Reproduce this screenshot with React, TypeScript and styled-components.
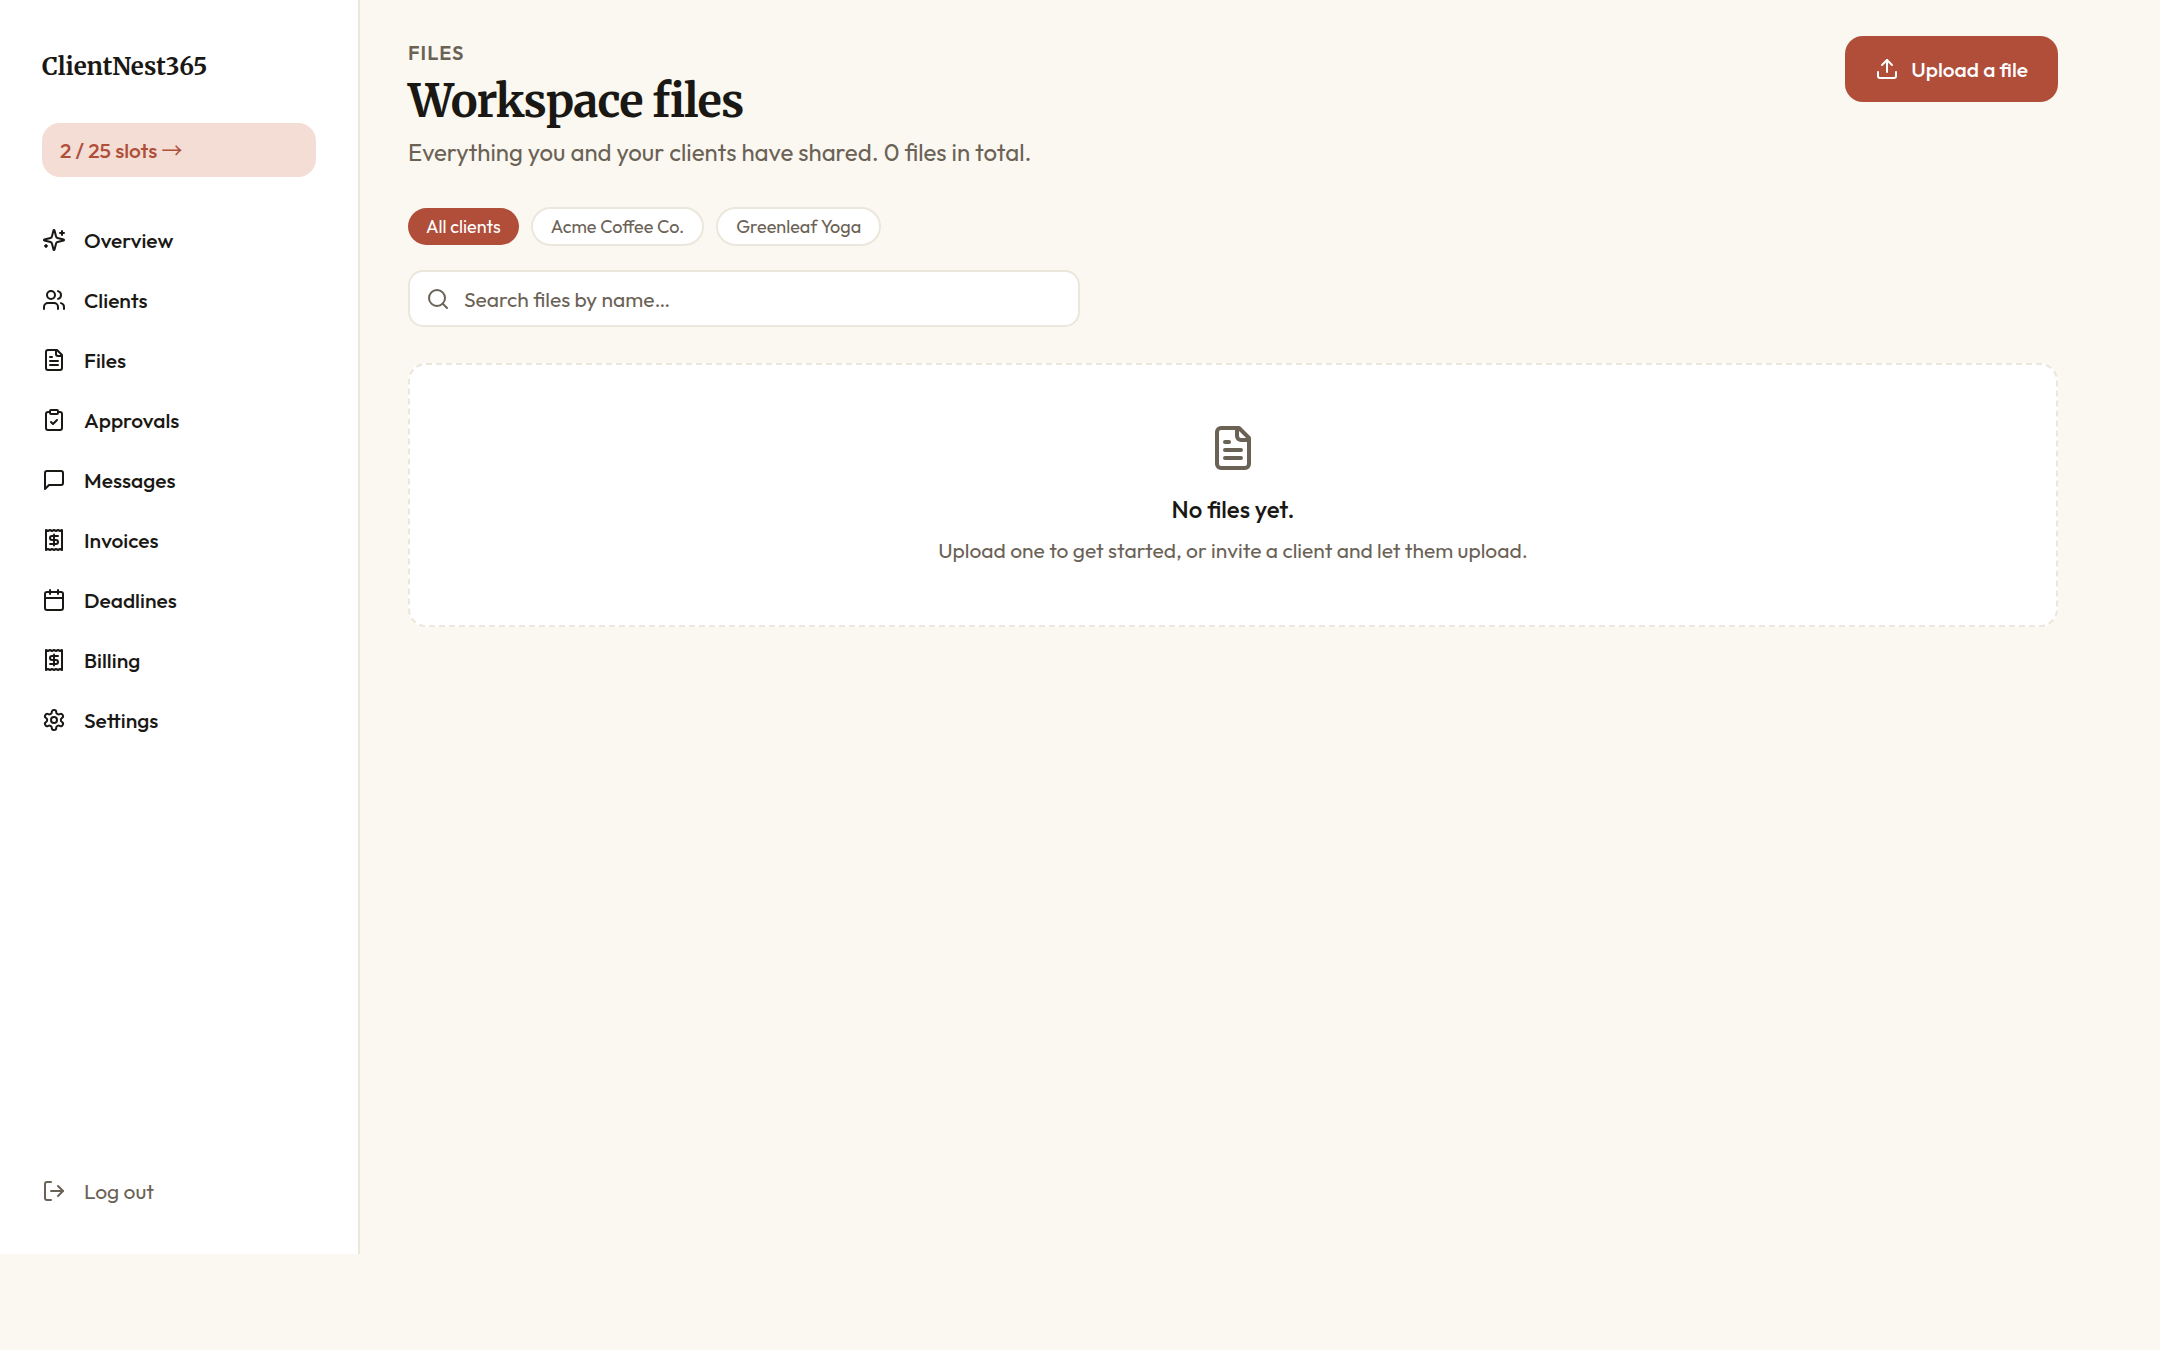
import React from 'react';
import styled, { createGlobalStyle } from 'styled-components';
import { Calendar, ClipboardCheck, LogOut, Search, Upload, Users } from 'lucide-react';

const color = {
  page: '#fbf8f1',
  surface: '#ffffff',
  ink: '#1a1814',
  muted: '#6b6256',
  line: '#ece7dc',
  accent: '#b04e3a',
  accentSoft: '#f4ddd4',
};

const sans = "Outfit, Lato, 'Open Sans', sans-serif";
const serif = "Merriweather, 'DejaVu Serif', serif";

const GlobalStyle = createGlobalStyle`
  *, *::before, *::after { box-sizing: border-box; }
  body {
    margin: 0;
    background: ${color.page};
    color: ${color.ink};
    font-family: ${sans};
    font-size: 21px;
    line-height: 30px;
  }
  h1, p { margin: 0; }
  button, input { font: inherit; color: inherit; }
  a { color: inherit; text-decoration: none; }
`;

const Shell = styled.div`
  display: grid;
  grid-template-columns: 360px minmax(0, 1fr);
  align-items: start;
  min-height: 100vh;
`;

const Sidebar = styled.aside`
  display: flex;
  flex-direction: column;
  height: calc(100vh - 96px);
  padding: 48px 42px 42px;
  background: ${color.surface};
  border-right: 2px solid ${color.line};
`;

const Brand = styled.a`
  font-family: ${serif};
  font-size: 24px;
  line-height: 38px;
  font-weight: 700;
`;

const SlotsLink = styled.a`
  display: block;
  margin: 37px 0 33px;
  padding: 12px 18px;
  border-radius: 18px;
  background: ${color.accentSoft};
  color: ${color.accent};
  font-weight: 500;
`;

const Arrow = styled.span`
  font-family: 'Noto Sans CJK JP', 'Liberation Sans', sans-serif;
  font-weight: 400;
  line-height: 1;
`;

const Nav = styled.nav`
  display: flex;
  flex-direction: column;
  flex: 1;
`;

const NavLink = styled.a`
  display: flex;
  align-items: center;
  gap: 18px;
  padding: 15px 0;
  font-weight: 500;
`;

const LogoutButton = styled.button`
  display: flex;
  align-items: center;
  gap: 18px;
  padding: 6px 0;
  border: 0;
  background: none;
  color: ${color.muted};
  cursor: pointer;
`;

const Main = styled.main`
  max-width: 1746px;
  padding: 36px 48px;
`;

const Header = styled.header`
  display: flex;
  align-items: flex-start;
  justify-content: space-between;
  gap: 24px;
`;

const Eyebrow = styled.p`
  color: ${color.muted};
  font-size: 20px;
  line-height: 33px;
  font-weight: 600;
  letter-spacing: 1px;
  text-transform: uppercase;
`;

const Title = styled.h1`
  font-family: ${serif};
  font-size: 45px;
  line-height: 64px;
  font-weight: 700;
  letter-spacing: -1px;
`;

const Lead = styled.p`
  color: ${color.muted};
  font-size: 24px;
  line-height: 39px;
`;

const UploadButton = styled.button`
  display: flex;
  align-items: center;
  gap: 12px;
  padding: 18px 30px;
  border: 0;
  border-radius: 18px;
  background: ${color.accent};
  color: ${color.surface};
  font-weight: 500;
  cursor: pointer;
`;

const Filters = styled.div`
  display: flex;
  flex-wrap: wrap;
  align-items: center;
  gap: 12px;
  margin: 35px 0 24px;
`;

const Chip = styled.button<{ $active?: boolean }>`
  padding: ${(p) => (p.$active ? '5px 18px' : '4px 18px')};
  border: ${(p) => (p.$active ? '0' : `2px solid ${color.line}`)};
  border-radius: 20px;
  background: ${(p) => (p.$active ? color.accent : color.surface)};
  color: ${(p) => (p.$active ? color.surface : color.muted)};
  font-size: 18px;
  line-height: 27px;
  cursor: pointer;
`;

const SearchBox = styled.label`
  display: flex;
  align-items: center;
  gap: 14px;
  max-width: 672px;
  padding: 10px 16px;
  border: 2px solid ${color.line};
  border-radius: 15px;
  background: ${color.surface};
  color: ${color.muted};
`;

const SearchInput = styled.input`
  flex: 1;
  min-width: 0;
  height: 33px;
  padding: 0;
  border: 0;
  outline: 0;
  background: none;
  &::placeholder { color: ${color.muted}; opacity: 1; }
`;

const EmptyState = styled.section`
  display: flex;
  flex-direction: column;
  align-items: center;
  margin-top: 36px;
  padding: 59px 48px 60px;
  border: 2px dashed ${color.line};
  border-radius: 18px;
  background: ${color.surface};
  color: ${color.muted};
  text-align: center;
`;

const EmptyTitle = styled.p`
  margin: 18px 0 6px;
  color: ${color.ink};
  font-size: 24px;
  line-height: 39px;
  font-weight: 500;
`;

type IconProps = { size?: number };

const outline = (...paths: string[]) =>
  function OutlineIcon({ size = 24 }: IconProps) {
    return (
      <svg
        width={size}
        height={size}
        viewBox="0 0 24 24"
        fill="none"
        stroke="currentColor"
        strokeWidth={2}
        strokeLinecap="round"
        strokeLinejoin="round"
        aria-hidden="true"
      >
        {paths.map((d) => (
          <path key={d} d={d} />
        ))}
      </svg>
    );
  };

const Sparkles = outline(
  'M9.937 15.5A2 2 0 0 0 8.5 14.063l-6.135-1.582a.5.5 0 0 1 0-.962L8.5 9.936A2 2 0 0 0 9.937 8.5l1.582-6.135a.5.5 0 0 1 .963 0L14.063 8.5A2 2 0 0 0 15.5 9.937l6.135 1.581a.5.5 0 0 1 0 .964L15.5 14.063a2 2 0 0 0-1.437 1.437l-1.582 6.135a.5.5 0 0 1-.963 0z',
  'M20 3v4',
  'M22 5h-4',
  'M4 17v2',
  'M5 18H3',
);

const FileText = outline(
  'M15 2H6a2 2 0 0 0-2 2v16a2 2 0 0 0 2 2h12a2 2 0 0 0 2-2V7Z',
  'M14 2v4a2 2 0 0 0 2 2h4',
  'M10 9H8',
  'M16 13H8',
  'M16 17H8',
);

const Message = outline('M21 15a2 2 0 0 1-2 2H7l-4 4V5a2 2 0 0 1 2-2h14a2 2 0 0 1 2 2z');

const Receipt = outline(
  'M4 2v20l2-1 2 1 2-1 2 1 2-1 2 1 2-1 2 1V2l-2 1-2-1-2 1-2-1-2 1-2-1-2 1Z',
  'M16 8h-6a2 2 0 1 0 0 4h4a2 2 0 1 1 0 4H8',
  'M12 17.5v-11',
);

const Gear = outline(
  'M12.22 2h-.44a2 2 0 0 0-2 2v.18a2 2 0 0 1-1 1.73l-.43.25a2 2 0 0 1-2 0l-.15-.08a2 2 0 0 0-2.73.73l-.22.38a2 2 0 0 0 .73 2.73l.15.1a2 2 0 0 1 1 1.72v.51a2 2 0 0 1-1 1.74l-.15.09a2 2 0 0 0-.73 2.73l.22.38a2 2 0 0 0 2.73.73l.15-.08a2 2 0 0 1 2 0l.43.25a2 2 0 0 1 1 1.73V20a2 2 0 0 0 2 2h.44a2 2 0 0 0 2-2v-.18a2 2 0 0 1 1-1.73l.43-.25a2 2 0 0 1 2 0l.15.08a2 2 0 0 0 2.73-.73l.22-.39a2 2 0 0 0-.73-2.73l-.15-.08a2 2 0 0 1-1-1.74v-.5a2 2 0 0 1 1-1.74l.15-.09a2 2 0 0 0 .73-2.73l-.22-.38a2 2 0 0 0-2.73-.73l-.15.08a2 2 0 0 1-2 0l-.43-.25a2 2 0 0 1-1-1.73V4a2 2 0 0 0-2-2z',
  'M15 12a3 3 0 1 1-6 0 3 3 0 0 1 6 0z',
);

const navItems = [
  { label: 'Overview', Icon: Sparkles },
  { label: 'Clients', Icon: Users },
  { label: 'Files', Icon: FileText },
  { label: 'Approvals', Icon: ClipboardCheck },
  { label: 'Messages', Icon: Message },
  { label: 'Invoices', Icon: Receipt },
  { label: 'Deadlines', Icon: Calendar },
  { label: 'Billing', Icon: Receipt },
  { label: 'Settings', Icon: Gear },
];

const clients = ['All clients', 'Acme Coffee Co.', 'Greenleaf Yoga'];

export default function App() {
  return (
    <>
      <GlobalStyle />
      <Shell>
        <Sidebar>
          <Brand href="#">ClientNest365</Brand>
          <SlotsLink href="#billing">
            2 / 25 slots <Arrow>→</Arrow>
          </SlotsLink>
          <Nav>
            {navItems.map(({ label, Icon }) => (
              <NavLink key={label} href={`#${label.toLowerCase()}`}>
                <Icon size={24} />
                {label}
              </NavLink>
            ))}
          </Nav>
          <LogoutButton type="button">
            <LogOut size={24} />
            Log out
          </LogoutButton>
        </Sidebar>
        <Main>
          <Header>
            <div>
              <Eyebrow>Files</Eyebrow>
              <Title>Workspace files</Title>
              <Lead>Everything you and your clients have shared. 0 files in total.</Lead>
            </div>
            <UploadButton type="button">
              <Upload size={24} />
              Upload a file
            </UploadButton>
          </Header>
          <Filters>
            {clients.map((name, i) => (
              <Chip key={name} type="button" $active={i === 0}>
                {name}
              </Chip>
            ))}
          </Filters>
          <SearchBox>
            <Search size={24} />
            <SearchInput type="search" aria-label="Search files" placeholder="Search files by name…" />
          </SearchBox>
          <EmptyState>
            <FileText size={48} />
            <EmptyTitle>No files yet.</EmptyTitle>
            <p>Upload one to get started, or invite a client and let them upload.</p>
          </EmptyState>
        </Main>
      </Shell>
    </>
  );
}
